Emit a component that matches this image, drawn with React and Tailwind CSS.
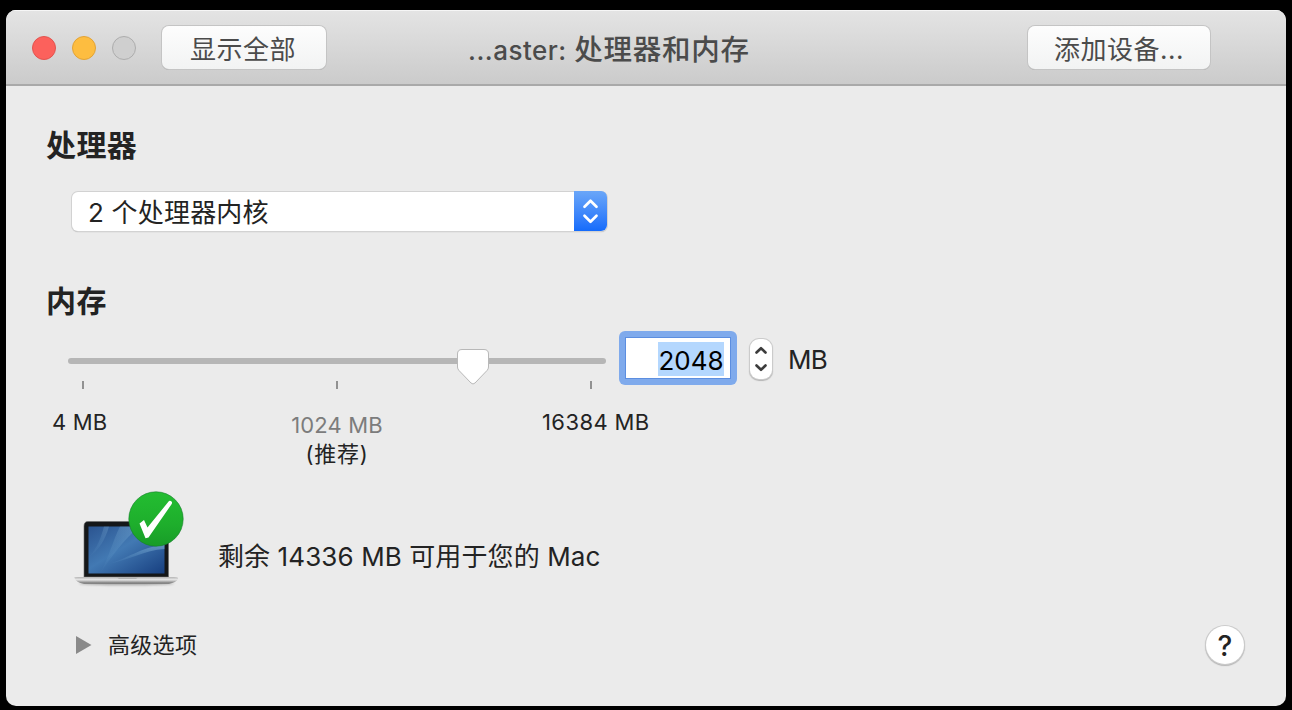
import React from "react";

function TitleBar() {
  const toolbarButton =
    "flex h-[43px] items-center justify-center rounded-[7px] bg-gradient-to-b from-[#fdfdfd] to-[#f2f3f3] pt-[4px] text-[26px] leading-none tracking-[0.5px] text-[#4b4b4b] shadow-[0_0_0_1px_#c4c4c4,0_1px_0_0_#9a9a9a]";
  return (
    <header className="flex h-[76px] shrink-0 items-center border-b-2 border-[#a9a9a9] bg-gradient-to-b from-[#e4e4e4] to-[#cbcbcb] shadow-[inset_0_1px_0_#f6f6f6]">
      <div className="ml-[26px] mt-[2px] flex w-[104px] gap-4">
        <span className="size-6 rounded-full border border-[#e2544f] bg-[#fc615c]" />
        <span className="size-6 rounded-full border border-[#e2a336] bg-[#fdbd40]" />
        <span className="size-6 rounded-full border border-[#adadad] bg-[#cfcfcf]" />
      </div>
      <button className={`${toolbarButton} ml-[26px] mt-px w-[164px] pr-[2px]`}>显示全部</button>
      <h1 className="ml-[142px] mt-[6px] w-[289px] whitespace-nowrap text-[28.5px] font-medium leading-none tracking-[0.75px] text-[#4b4b4b]">
        <span className="text-[26px] tracking-[0.5px]">...aster: </span>处理器和内存
      </h1>
      <button className={`${toolbarButton} ml-auto mr-[76px] mt-px w-[182px]`}>添加设备...</button>
    </header>
  );
}

function ProcessorSelect() {
  return (
    <div className="ml-[66px] mt-[27px] flex h-[39px] w-[535px] rounded-[6px] bg-white shadow-[0_0_0_1px_#d2d2d2,0_1px_1px_0_#9d9d9d]">
      <span className="flex flex-1 items-center whitespace-nowrap pl-[16px] pt-[3px] text-[26px] leading-none tracking-[0.2px]">
        2 个处理器内核
      </span>
      <span className="-mt-px flex h-[40px] w-[33px] items-center justify-center rounded-r-[6px] bg-gradient-to-b from-[#6aa6f8] to-[#146bfb]">
        <svg width="20" height="30" viewBox="0 0 20 30" fill="none" stroke="#fff" strokeWidth="2.7" strokeLinecap="round" strokeLinejoin="round">
          <path d="M3.500 10.700L9.500 4.700L15.500 10.700M3.500 19.700L9.500 25.700L15.500 19.700" />
        </svg>
      </span>
    </div>
  );
}

function MemorySlider() {
  return (
    <svg className="block" width="540" height="62" viewBox="0 0 540 62">
      <rect x="0" y="27" width="538" height="6" rx="3" fill="#b6b6b6" />
      <g fill="#919191">
        <rect x="14" y="50" width="2" height="8" />
        <rect x="268" y="50" width="2" height="8" />
        <rect x="522" y="50" width="2" height="8" />
      </g>
      <path
        d="M394 18.500H416Q420.500 18.500 420.500 23V36Q420.500 38 419 39.500L407 52Q405 54 403 52L391 39.500Q389.500 38 389.500 36V23Q389.500 18.500 394 18.500Z"
        fill="#fff"
        stroke="#b8b8b8"
        strokeWidth="1"
      />
    </svg>
  );
}

function MemoryRow() {
  return (
    <div className="ml-[62px] mt-[10px] flex h-[62px]">
      <MemorySlider />
      <div className="ml-[11px] h-[54px] w-[118px] rounded-[6px] bg-[#7faaec] p-[6px]">
        <div className="flex h-full items-center justify-end border border-[#5c8ee0] bg-white pr-[6px] pt-[2px]">
          <span className="flex h-[34px] w-[66px] items-center justify-center bg-[#b4d7fe] pt-[3px] text-[26px] leading-none text-black">
            2048
          </span>
        </div>
      </div>
      <div className="ml-[13px] mt-[8px] flex h-[40px] w-[22px] items-center justify-center rounded-[9px] bg-white shadow-[0_0_0_1px_#cbcbcb,0_1px_1px_1px_#b5b5b5]">
        <svg width="16" height="30" viewBox="0 0 16 30" fill="none" stroke="#3c3c3c" strokeWidth="2.6" strokeLinecap="round" strokeLinejoin="round">
          <path d="M3.500 8.500L8 4.200L12.500 8.500M3.500 21.500L8 25.800L12.500 21.500" />
        </svg>
      </div>
      <span className="ml-[16px] mt-[15px] text-[26px] leading-[28px] tracking-[-0.7px]">MB</span>
    </div>
  );
}

function SliderLabels() {
  return (
    <div className="ml-[46px] mt-[16px] flex h-[67px] whitespace-nowrap text-[22px]">
      <span className="w-[191px] leading-[26px] tracking-[0.2px]">4 MB</span>
      <span className="mt-[3px] flex w-[188px] flex-col items-center text-center">
        <span className="leading-[26px] text-[#7c7c7c] tracking-[0.15px]">1024 MB</span>
        <span className="leading-[32px] tracking-[0.7px]">(推荐)</span>
      </span>
      <span className="ml-[111px] leading-[26px] tracking-[0.4px]">16384 MB</span>
    </div>
  );
}

function LaptopIcon() {
  return (
    <svg width="116" height="104" viewBox="0 0 116 104">
      <defs>
        <linearGradient id="screen" x1="0" y1="0" x2="1" y2="1">
          <stop offset="0" stopColor="#2b5490" />
          <stop offset=".45" stopColor="#4279b3" />
          <stop offset="1" stopColor="#173f80" />
        </linearGradient>
        <linearGradient id="ray" x1="1" y1="0" x2="0" y2="1">
          <stop offset="0" stopColor="#9bc9e6" stopOpacity=".6" />
          <stop offset="1" stopColor="#6ea9d5" stopOpacity="0.05" />
        </linearGradient>
        <linearGradient id="base" x1="0" y1="0" x2="0" y2="1">
          <stop offset="0" stopColor="#b4b4b4" />
          <stop offset=".4" stopColor="#e6e6e6" />
          <stop offset="1" stopColor="#666666" />
        </linearGradient>
        <linearGradient id="badge" x1="0" y1="0" x2="0" y2="1">
          <stop offset="0" stopColor="#23bd31" />
          <stop offset=".6" stopColor="#1eae2c" />
          <stop offset="1" stopColor="#189c28" />
        </linearGradient>
        <filter id="soft" x="-.2" y="-1" width="1.4" height="3">
          <feGaussianBlur stdDeviation=".8" />
        </filter>
      </defs>
      <ellipse cx="56.500" cy="93.800" rx="48" ry="1.500" fill="#777" opacity=".6" filter="url(#soft)" />
      <path d="M14 36Q14 31.500 18 31.500H95Q98.500 31.500 98.500 36V87H14Z" fill="#151719" stroke="#6d6d6d" strokeWidth=".6" />
      <rect x="18.500" y="36.500" width="76" height="47" fill="url(#screen)" />
      <path d="M30 83.500C42 66 52 52 69 36.500H50C43 50 39 67 30 83.500Z" fill="url(#ray)" opacity=".5" />
      <path d="M38 74C58 69 70 57 94.500 55V59C74 60 60 70 38 74Z" fill="url(#ray)" opacity=".8" />
      <path d="M19 67C28 57 31 47 34 36.500H39C35 50 29 60 19 67Z" fill="url(#ray)" opacity=".4" />
      <path d="M4.500 88Q3.500 87 8 87H104Q109 87 108 89Q106 92.800 99 93.800H14Q6 92.800 4.500 88Z" fill="url(#base)" />
      <path d="M15 86.500H98" stroke="#333" strokeWidth="1" />
      <path d="M47 87.500H68L66 89H49Z" fill="#b4b4b4" />
      <circle cx="86" cy="29" r="27.200" fill="url(#badge)" stroke="#16802b" strokeWidth=".6" />
      <path d="M69.500 33.500L74 30L77.500 37.500L99 11Q100.500 10.500 101.500 11.500Q102.500 12.500 101.700 14L78.500 47.500L75.500 48.300Z" fill="#fff" />
    </svg>
  );
}

export default function App() {
  return (
    <div className="h-[710px] w-[1292px] bg-black px-[6px] pb-[4px] pt-[10px] font-[Inter,'Noto_Sans_CJK_SC',sans-serif] text-[#232323]">
      <div className="flex h-full flex-col overflow-hidden rounded-[10px] bg-[#ebebeb]">
        <TitleBar />
        <main className="flex flex-col">
          <h2 className="ml-[40px] mt-[39px] text-[30px] font-bold leading-[40px] tracking-[0.4px]">处理器</h2>
          <ProcessorSelect />
          <h2 className="ml-[40px] mt-[50px] text-[30px] font-bold leading-[40px] tracking-[0.4px]">内存</h2>
          <MemoryRow />
          <SliderLabels />
          <div className="ml-[64px] mt-[14px] flex h-[104px]">
            <LaptopIcon />
            <p className="ml-[32px] mt-[47px] whitespace-nowrap text-[26px] leading-[40px] tracking-[0.1px]">
              剩余 14336 MB 可用于您的 Mac
            </p>
          </div>
          <div className="ml-[70px] mr-[42px] mt-[31px] flex h-[40px] items-center">
            <svg width="16" height="18" viewBox="0 0 16 18">
              <path d="M0 0L15.500 9L0 18Z" fill="#8a8a8a" />
            </svg>
            <span className="ml-[16px] text-[22px] leading-[30px] tracking-[0.3px]">高级选项</span>
            <button className="ml-auto flex size-[38px] items-center justify-center rounded-full bg-white pt-px text-[28px] font-medium leading-none shadow-[0_0_0_1px_#cbcbcb,0_1px_1px_1px_#b5b5b5]">
              ?
            </button>
          </div>
        </main>
      </div>
    </div>
  );
}
